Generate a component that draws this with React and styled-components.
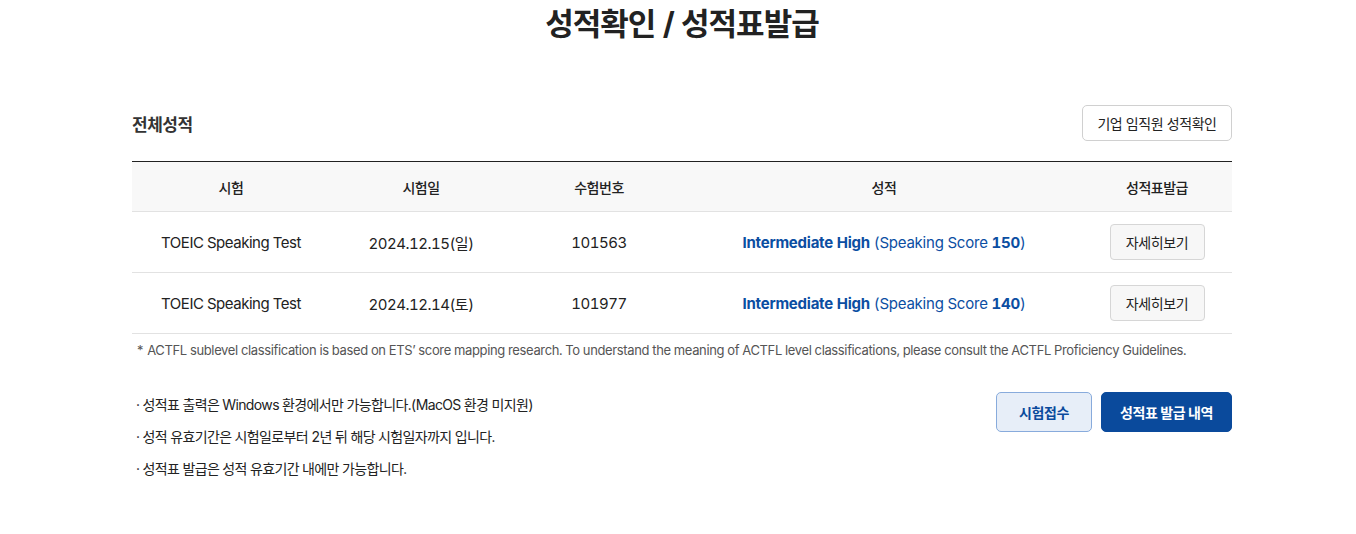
import React from 'react'
import styled, { createGlobalStyle } from 'styled-components'

const GlobalStyle = createGlobalStyle`
  body {
    margin: 0;
    background: #fff;
    font-family: Inter, "Noto Sans CJK KR", sans-serif;
    color: #222;
    letter-spacing: -0.03em;
    font-variant-numeric: tabular-nums;
  }
  #root {
    padding-left: 8px;
  }
  button {
    letter-spacing: -0.03em;
  }
`

const rows = [
  { exam: 'TOEIC Speaking Test', date: '2024.12.15(일)', no: '101563', level: 'Intermediate High', score: 150 },
  { exam: 'TOEIC Speaking Test', date: '2024.12.14(토)', no: '101977', level: 'Intermediate High', score: 140 },
]

const cols = '198px 182px 174px 396px 150px'

function App() {
  return (
    <>
      <GlobalStyle />
      <Page>
        <Title>성적확인 / 성적표발급</Title>
        <SectionHead>
          <SectionTitle>전체성적</SectionTitle>
          <OutlineButton>기업 임직원 성적확인</OutlineButton>
        </SectionHead>
        <Table>
          <HeadRow>
            <HeadCell>시험</HeadCell>
            <HeadCell>시험일</HeadCell>
            <HeadCell>수험번호</HeadCell>
            <HeadCell>성적</HeadCell>
            <HeadCell>성적표발급</HeadCell>
          </HeadRow>
          {rows.map((r) => (
            <Row key={r.no}>
              <Cell>{r.exam}</Cell>
              <Cell>{r.date}</Cell>
              <Cell>{r.no}</Cell>
              <Cell>
                <Score>
                  <b>{r.level}</b> (Speaking Score <b>{r.score}</b>)
                </Score>
              </Cell>
              <Cell>
                <DetailButton>자세히보기</DetailButton>
              </Cell>
            </Row>
          ))}
        </Table>
        <Footnote>
          * ACTFL sublevel classification is based on ETS’ score mapping research. To understand the meaning of ACTFL level classifications, please consult the ACTFL Proficiency Guidelines.
        </Footnote>
        <Bottom>
          <Notes>
            <li>· 성적표 출력은 Windows 환경에서만 가능합니다.(MacOS 환경 미지원)</li>
            <li>· 성적 유효기간은 시험일로부터 2년 뒤 해당 시험일자까지 입니다.</li>
            <li>· 성적표 발급은 성적 유효기간 내에만 가능합니다.</li>
          </Notes>
          <Actions>
            <ActionButton $variant="light">시험접수</ActionButton>
            <ActionButton $variant="primary">성적표 발급 내역</ActionButton>
          </Actions>
        </Bottom>
      </Page>
    </>
  )
}

export default App

const Page = styled.div`
  width: 1100px;
  margin: 0 auto;
  padding-bottom: 40px;
`

const Title = styled.h1`
  margin: 0;
  padding-top: 4px;
  text-align: center;
  font-size: 31px;
  line-height: 40px;
  font-weight: 700;
  color: #222;
  letter-spacing: -1px;
`

const SectionHead = styled.div`
  display: flex;
  justify-content: space-between;
  align-items: center;
  margin-top: 61px;
  margin-bottom: 20px;
`

const SectionTitle = styled.h2`
  margin: 0;
  font-size: 17px;
  font-weight: 700;
  color: #333;
`

const OutlineButton = styled.button`
  height: 36px;
  width: 150px;
  padding: 0;
  border: 1px solid #d0d0d0;
  border-radius: 5px;
  background: #fff;
  font-family: inherit;
  font-size: 14px;
  color: #222;
`

const Table = styled.div`
  border-top: 1px solid #222;
`

const HeadRow = styled.div`
  display: grid;
  grid-template-columns: ${cols};
  height: 49px;
  background: #f8f8f8;
  border-bottom: 1px solid #e2e2e2;
`

const HeadCell = styled.div`
  display: flex;
  align-items: center;
  justify-content: center;
  font-size: 14px;
  font-weight: 500;
  color: #222;
`

const Row = styled.div`
  display: grid;
  grid-template-columns: ${cols};
  height: 60px;
  border-bottom: 1px solid #e2e2e2;
`

const Cell = styled.div`
  display: flex;
  align-items: center;
  justify-content: center;
  font-size: 15px;
  color: #222;
`

const Score = styled.span`
  color: #0b4ea2;
  letter-spacing: -0.015em;
  b {
    font-weight: 700;
  }
`

const DetailButton = styled.button`
  width: 95px;
  height: 36px;
  padding: 0;
  border: 1px solid #d6d6d6;
  border-radius: 4px;
  background: #f7f7f7;
  font-family: inherit;
  font-size: 14px;
  color: #222;
`

const Footnote = styled.p`
  margin: 7px 0 0;
  padding-left: 4px;
  font-size: 13px;
  line-height: 18px;
  color: #555;
  letter-spacing: -0.028em;
`

const Bottom = styled.div`
  display: flex;
  justify-content: space-between;
  align-items: flex-start;
  margin-top: 33px;
`

const Notes = styled.ul`
  list-style: none;
  margin: -3px 0 0;
  padding: 0 0 0 4px;
  li {
    font-size: 14px;
    line-height: 32px;
    color: #222;
    letter-spacing: -0.045em;
  }
`

const Actions = styled.div`
  display: flex;
  gap: 9px;
`

const ActionButton = styled.button`
  height: 40px;
  width: ${(p) => (p.$variant === 'primary' ? '131px' : '96px')};
  padding: 0;
  border-radius: 5px;
  font-family: inherit;
  font-size: 14px;
  font-weight: 700;
  border: 1px solid ${(p) => (p.$variant === 'primary' ? '#0a4a9c' : '#88abdc')};
  background: ${(p) => (p.$variant === 'primary' ? '#0a4a9c' : '#e7eef8')};
  color: ${(p) => (p.$variant === 'primary' ? '#fff' : '#0a4a9c')};
`
